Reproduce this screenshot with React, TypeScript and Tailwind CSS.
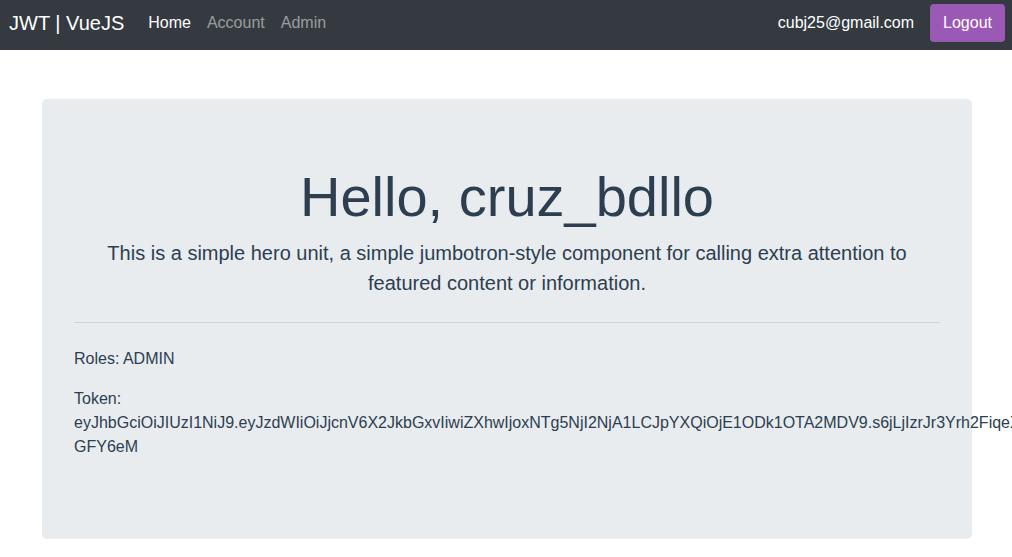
import React from 'react';

const token =
  'eyJhbGciOiJIUzI1NiJ9.eyJzdWIiOiJjcnV6X2JkbGxvIiwiZXhwIjoxNTg5NjI2NjA1LCJpYXQiOjE1ODk1OTA2MDV9.s6jLjIzrJr3Yrh2FiqeXnQk4tbwJzPbRkqW8-GFY6eM';

const App: React.FC = () => {
  return (
    <div
      className="min-h-screen overflow-x-hidden bg-white text-[#2c3e50]"
      style={{ fontFamily: '"Liberation Sans", Arial, sans-serif' }}
    >
      {/* Navbar */}
      <nav className="flex h-[50px] items-center bg-[#343a40] pl-[9px] pr-[7px] pt-1 pb-2">
        <a className="mr-4 text-xl leading-[30px] text-white">JWT | VueJS</a>
        <ul className="flex text-base leading-6">
          <li className="px-2 text-white">Home</li>
          <li className="px-2 text-white/50">Account</li>
          <li className="px-2 text-white/50">Admin</li>
        </ul>
        <div className="ml-auto flex items-center">
          <span className="px-2 text-base leading-6 text-white">cubj25@gmail.com</span>
          <button className="ml-2 h-[38px] rounded-[4px] bg-[#9b59b6] px-[13px] text-base leading-6 text-white">
            Logout
          </button>
        </div>
      </nav>

      {/* Content */}
      <div className="mx-auto mt-[49px] w-[960px] pl-[16px] pr-[14px]">
        <div className="rounded-[5px] bg-[#e9ecef] px-8 py-16">
          <h1 className="mb-2 text-center text-[56px] font-light leading-[1.2]">Hello, cruz_bdllo</h1>
          <p className="mb-4 text-center text-xl leading-[30px]">
            This is a simple hero unit, a simple jumbotron-style component for calling extra attention to featured
            content or information.
          </p>
          <hr className="my-6 border-t border-black/10" />
          <p className="mb-4 text-base leading-6">Roles: ADMIN</p>
          <p className="mb-4 text-base leading-6">
            Token:
            <br />
            {token}
          </p>
        </div>
      </div>
    </div>
  );
};

export default App;
